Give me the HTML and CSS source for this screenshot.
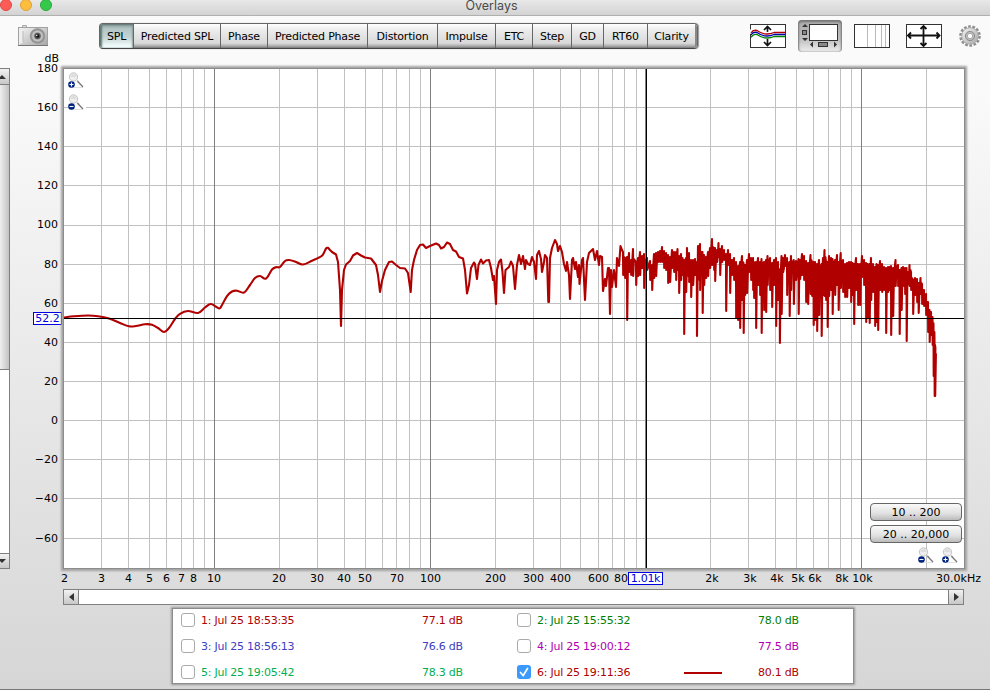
FILE: index.html
```
<!DOCTYPE html>
<html lang="en">
<head>
    <meta charset="UTF-8">
    <title>Overlays</title>
    <link rel="stylesheet" href="styles.css">
</head>
<body>
    <!-- Icons used more than once -->
    <svg class="defs">
        <defs>
            <linearGradient id="metal" x1="0" y1="0" x2="1" y2="1">
                <stop offset="0" stop-color="#f4f4f4"/>
                <stop offset="1" stop-color="#a6a6a6"/>
            </linearGradient>
            <radialGradient id="lens">
                <stop offset="0" stop-color="#eee"/>
                <stop offset="0.35" stop-color="#777"/>
                <stop offset="0.6" stop-color="#ccc"/>
                <stop offset="1" stop-color="#777"/>
            </radialGradient>
            <symbol id="glass" viewBox="0 0 16 17">
                <path d="M1 15.5h14" stroke="#e2e2e2"/>
                <circle cx="5.5" cy="5" r="4.2" fill="#eee" stroke="#c4c4c4"/>
                <path d="M2.5 5a3 3 0 0 1 6 0z" fill="#ddd"/>
                <path d="M9 8.5l2 2" stroke="#bbb" stroke-width="1.5"/>
                <path d="M9.500 9.300l5.500 5.700" stroke="#777" stroke-width="1.3"/>
                <circle cx="3.5" cy="12.5" r="3.3" fill="#00247e"/>
            </symbol>
            <symbol id="zoom-in" viewBox="0 0 16 17">
                <use href="#glass"/>
                <path d="M1.5 12.5h4M3.5 10.5v4" stroke="#fff" stroke-width="1.1"/>
            </symbol>
            <symbol id="zoom-out" viewBox="0 0 16 17">
                <use href="#glass"/>
                <path d="M1.5 12.5h4" stroke="#fff" stroke-width="1.1"/>
            </symbol>
        </defs>
    </svg>

    <div class="titlebar">
        <div class="lights">
            <span class="light red"></span>
            <span class="light yellow"></span>
            <span class="light green"></span>
        </div>
        <div class="title">Overlays</div>
    </div>

    <!-- Toolbar -->
    <div class="toolbar">
        <svg class="camera" width="30" height="22" viewBox="0 0 30 22">
            <path d="M4.500 2v-1.500h4v1.500" fill="#ddd" stroke="#aaa"/>
            <rect x="0.500" y="2.500" width="29" height="18" fill="url(#metal)" stroke="#a2a2a2"/>
            <path d="M1 3l4 3v11l-4 3z" fill="#eee"/>
            <path d="M5 6v11" stroke="#bbb"/>
            <path d="M0 20.500h30" stroke="#777"/>
            <circle cx="19.500" cy="11" r="7.300" fill="url(#lens)" stroke="#999"/>
            <circle cx="19.500" cy="11" r="3" fill="#555"/>
            <circle cx="19.500" cy="11" r="1.800" fill="#111"/>
            <circle cx="18.800" cy="10.500" r="0.700" fill="#fff"/>
        </svg>
        <div class="tabs">
            <button class="tab active">SPL</button>
            <button class="tab">Predicted SPL</button>
            <button class="tab">Phase</button>
            <button class="tab">Predicted Phase</button>
            <button class="tab">Distortion</button>
            <button class="tab">Impulse</button>
            <button class="tab">ETC</button>
            <button class="tab">Step</button>
            <button class="tab">GD</button>
            <button class="tab">RT60</button>
            <button class="tab">Clarity</button>
        </div>
        <div class="tools">
            <svg width="36" height="24" viewBox="0 0 36 24">
                <rect x="0.500" y="0.500" width="35" height="23" fill="#fff" stroke="#333"/>
                <path d="M17.500 3v18M14 6l3.500-3.500L21 6M14 18l3.500 3.500L21 18" fill="none" stroke="#111" stroke-width="1.700"/>
                <g fill="none" stroke-width="1.300">
                    <path d="M1 10Q3 6.500 7 7.500Q12 11 17 11.500Q21 11.500 24 10H35" stroke="#fff" stroke-width="7"/>
                    <path d="M1 9Q3 5.500 7 6.500Q12 10 17 10Q21 10 24 8.500H35" stroke="#b00000"/>
                    <path d="M1 11Q3 7.500 7 8.500Q12 12 17 12Q21 12 24 10.500H35" stroke="#0000b0"/>
                    <path d="M1 13.500Q3 9.500 7 10.500Q12 14 17 14Q21 14 24 12.500H35" stroke="#008000"/>
                </g>
            </svg>
            <div class="tool-on">
                <svg width="40" height="28" viewBox="0 0 40 28">
                    <rect x="9.500" y="2.500" width="28" height="16" fill="#fff" stroke="#333"/>
                    <path d="M2 5l3-3 3 3zM2 16l3 3 3-3zM13 19.500l-3 3 3 3zM34 19.500l3 3-3 3z" fill="#333"/>
                    <rect x="2.500" y="8.500" width="4" height="4" fill="#888" stroke="#333"/>
                    <rect x="18.500" y="20.500" width="9" height="4" fill="#888" stroke="#333"/>
                </svg>
            </div>
            <svg width="36" height="24" viewBox="0 0 36 24">
                <rect x="0.500" y="0.500" width="35" height="23" fill="#fff" stroke="#333"/>
                <path d="M13.500 1v22M21.500 1v22M27.500 1v22M31.500 1v22" stroke="#bbb"/>
            </svg>
            <svg class="move" width="36" height="24" viewBox="0 0 36 24">
                <rect x="0.500" y="0.500" width="35" height="23" fill="#fff" stroke="#333"/>
                <path d="M2 11.500h31M17.500 2v20M5 8.500l-3 3 3 3M30.500 8.500l3 3-3 3M14.500 5l3-3 3 3M14.500 19l3 3 3-3" fill="none" stroke="#111" stroke-width="1.800"/>
            </svg>
            <svg class="gear" width="22" height="22" viewBox="-11 -11 22 22">
                <circle r="9.500" fill="none" stroke="#8e8e8e" stroke-width="2.600" stroke-dasharray="2.700 1.563"/>
                <circle r="8.300" fill="url(#metal)" stroke="#a2a2a2" stroke-width="0.800"/>
                <circle r="4.600" fill="#bbb" stroke="#8c8c8c"/>
                <circle r="2.700" fill="#fff" stroke="#aaa"/>
            </svg>
        </div>
    </div>

    <!-- Chart area -->
    <div class="main">
        <div class="vscroll">
            <div class="arrow-box"><span class="arrow up"></span></div>
            <div class="thumb"></div>
            <div class="track"></div>
            <div class="arrow-box"><span class="arrow down"></span></div>
        </div>
        <div class="y-axis">
            <span class="unit">dB</span>
            <div class="y-labels">
                <span>180</span>
                <span>160</span>
                <span>140</span>
                <span>120</span>
                <span>100</span>
                <span>80</span>
                <span>60</span>
                <span>40</span>
                <span>20</span>
                <span>0</span>
                <span>−20</span>
                <span>−40</span>
                <span>−60</span>
            </div>
            <span class="readout y-readout">52.2</span>
        </div>
        <div class="plot">
            <svg id="chart" width="900" height="499" viewBox="64 69 900 499">
                <g id="grid"></g>
                <path id="trace"/>
                <path class="cursor" d="M646.500 69v499M64 318.500h900"/>
            </svg>
            <div class="zoom-v">
                <svg width="16" height="17"><use href="#zoom-in"/></svg>
                <svg width="16" height="17"><use href="#zoom-out"/></svg>
            </div>
            <div class="ranges">
                <button class="range">10 .. 200</button>
                <button class="range">20 .. 20,000</button>
                <div class="zoom-h">
                    <svg width="16" height="17"><use href="#zoom-out"/></svg>
                    <svg width="16" height="17"><use href="#zoom-in"/></svg>
                </div>
            </div>
        </div>
    </div>

    <div class="x-axis">
        <svg id="xLabels" width="990" height="20" viewBox="0 569 990 20"></svg>
        <span class="readout x-readout">1.01k</span>
    </div>

    <div class="hscroll">
        <div class="arrow-box"><span class="arrow left"></span></div>
        <div class="track"></div>
        <div class="arrow-box"><span class="arrow right"></span></div>
    </div>

    <!-- Measurement list -->
    <div class="legend">
        <div class="entry c1"><span class="check"></span><span class="name">1: Jul 25 18:53:35</span><span class="line"></span><span class="value">77.1 dB</span></div>
        <div class="entry c2"><span class="check"></span><span class="name">2: Jul 25 15:55:32</span><span class="line"></span><span class="value">78.0 dB</span></div>
        <div class="entry c3"><span class="check"></span><span class="name">3: Jul 25 18:56:13</span><span class="line"></span><span class="value">76.6 dB</span></div>
        <div class="entry c4"><span class="check"></span><span class="name">4: Jul 25 19:00:12</span><span class="line"></span><span class="value">77.5 dB</span></div>
        <div class="entry c5"><span class="check"></span><span class="name">5: Jul 25 19:05:42</span><span class="line"></span><span class="value">78.3 dB</span></div>
        <div class="entry c6">
            <span class="check checked"><svg width="14" height="14" viewBox="0 0 14 14"><path d="M3.500 7.500l2.700 3L10.500 3.500" fill="none" stroke="#fff" stroke-width="1.700" stroke-linecap="round"/></svg></span>
            <span class="name">6: Jul 25 19:11:36</span><span class="line shown"></span><span class="value">80.1 dB</span>
        </div>
    </div>

    <script src="chart.js"></script>
</body>
</html>
```
FILE: styles.css
```
/* General Styles */
* {
    box-sizing: border-box;
}

body {
    margin: 0;
    width: 990px;
    height: 690px;
    overflow: hidden;
    font-family: "DejaVu Sans", sans-serif;
    font-size: 11px;
    color: #000;
    background: linear-gradient(to bottom, #fafafa 0, #fafafa 90px, #d6d6d6 690px);
    border-bottom: 1px solid #777;
}

button {
    font-family: inherit;
    font-size: 11px;
    padding: 0;
    color: #000;
}

svg {
    display: block;
}

.defs {
    position: absolute;
    width: 0;
    height: 0;
}

/* Title bar */
.titlebar {
    display: flex;
    height: 16px;
    background: linear-gradient(to bottom, #e8e8e8, #d3d3d3);
    border-bottom: 1px solid #b0b0b0;
}

.lights {
    display: flex;
    gap: 8px;
    width: 100px;
    margin: -1px 0 0 0;
}

.light {
    width: 12px;
    height: 12px;
    border-radius: 50%;
    flex: none;
}

.red {
    background: #fc5b57;
    border: 1px solid #e2463f;
}

.yellow {
    background: #fdbe40;
    border: 1px solid #e0a030;
}

.green {
    background: #35c94b;
    border: 1px solid #27a837;
}

.title {
    width: 783px;
    text-align: center;
    font: 12.5px/12px Inter, sans-serif;
    color: #4a4a4a;
}

/* Toolbar */
.toolbar {
    display: flex;
    height: 37px;
    padding-left: 18px;
}

.camera {
    margin-top: 9px;
}

.tabs {
    display: grid;
    grid-template-columns: 34px 87px 47px 100px 70px 58px 37px 39px 32px 44px 49px;
    width: 599px;
    height: 26px;
    margin: 7px 0 0 51px;
    border-radius: 4px;
    overflow: hidden;
    border: 1px solid #666;
    border-bottom-color: #444;
    box-shadow: 1px 0 1px #999;
}

.tab {
    border: none;
    border-right: 1px solid #666;
    letter-spacing: -0.2px;
    white-space: nowrap;
    background: linear-gradient(to bottom, #fff 0, #ececec 25%, #d9d9d9 80%, #aaa 92%, #777 100%);
}

.tab:last-child {
    border-right: 2px solid #888;
}

.active {
    background: linear-gradient(to bottom, #8ba09f 0, #b3c6c5 20%, #c3d3d2 55%, #f6ffff 95%);
    box-shadow: inset 2px 1px 2px #607573, inset -1px 0 2px #8a9c9b;
}

.tools {
    display: flex;
    gap: 12px;
    margin: 8px 0 0 52px;
}

.tool-on {
    width: 44px;
    height: 32px;
    margin-top: -4px;
    padding: 2px;
    border-radius: 4px;
    background: linear-gradient(to bottom, #aaa, #c0c0c0 60%, #eee);
    box-shadow: inset 0 1px 2px 1px #777;
}

.tools .move {
    margin-left: 4px;
}

.tools .gear {
    margin: 1px 0 0 5px;
}

/* Chart area */
.main {
    display: flex;
    height: 515px;
}

.vscroll {
    display: flex;
    flex-direction: column;
    width: 10px;
    height: 501px;
    margin-top: 15px;
    border: 1px solid #808080;
    border-left: none;
}

.vscroll .arrow-box {
    height: 15px;
}

.thumb {
    height: 286px;
    background: linear-gradient(to right, #eee, #c2c2c2);
    border-top: 1px solid #808080;
    border-bottom: 1px solid #808080;
}

.track {
    flex: 1;
    background: #fff;
}

.arrow-box {
    display: flex;
    align-items: center;
    justify-content: center;
    flex: none;
    background: linear-gradient(to bottom, #f2f2f2, #c8c8c8);
}

.vscroll .arrow-box {
    justify-content: flex-start;
}

.vscroll .arrow-box:last-child {
    border-top: 1px solid #808080;
}

.arrow {
    border: 4px solid transparent;
}

.up {
    border-top: none;
    border-bottom: 4px solid #333;
    margin-left: -2px;
}

.down {
    border-bottom: none;
    border-top: 4px solid #333;
    margin-left: -2px;
}

.left {
    border-left: none;
    border-right: 5px solid #333;
}

.right {
    border-right: none;
    border-left: 5px solid #333;
}

.y-axis {
    position: relative;
    width: 53px;
    text-align: right;
}

.unit {
    display: block;
    height: 12px;
    line-height: 12px;
    padding-right: 4px;
}

.y-labels {
    display: flex;
    flex-direction: column;
    margin-top: -16.2px;
    padding-right: 5px;
}

.y-labels span {
    height: 39.150px;
    line-height: 39.150px;
}

.readout {
    position: absolute;
    background: #fff;
    color: #0000e0;
    border: 1px solid #0000e0;
    text-align: center;
    line-height: 11px;
    height: 13px;
}

.y-readout {
    top: 259px;
    left: 23px;
    width: 29px;
}

.plot {
    position: relative;
    width: 902px;
    height: 501px;
    margin-top: 15px;
    background: #fff;
    border: 1px solid #8c8c8c;
    box-shadow: 0 0 2px 2px #a2a2a2;
}

#trace {
    fill: none;
    stroke: #b00000;
    stroke-width: 2.1;
    stroke-linejoin: round;
    stroke-linecap: round;
}

.minor {
    stroke: #c0c0c0;
}

.major {
    stroke: #808080;
}

.cursor {
    stroke: #000;
}

.zoom-v {
    position: absolute;
    left: 4px;
    top: 3px;
    display: flex;
    flex-direction: column;
    gap: 5px;
    width: 18px;
    background: #fff;
}

.ranges {
    position: absolute;
    right: 2px;
    bottom: 4px;
    display: flex;
    flex-direction: column;
    gap: 4px;
    width: 92px;
}

.range {
    height: 18px;
    border: 1px solid #666;
    border-radius: 4px;
    background: linear-gradient(to bottom, #fafafa, #e0e0e0 60%, #bbb);
}

.zoom-h {
    display: flex;
    justify-content: flex-end;
    gap: 8px;
    padding-right: 4px;
}

.x-axis {
    position: relative;
    height: 21px;
}

.x-readout {
    left: 628px;
    top: 4px;
    width: 35px;
    letter-spacing: -0.3px;
}

.hscroll {
    display: flex;
    width: 901px;
    height: 16px;
    margin-left: 63px;
    border: 1px solid #808080;
}

.hscroll .arrow-box {
    width: 15px;
}

.hscroll .arrow-box:first-child {
    border-right: 1px solid #808080;
}

.hscroll .arrow-box:last-child {
    border-left: 1px solid #808080;
}

/* Measurement list */
.legend {
    display: grid;
    grid-template-columns: 336px 1fr;
    grid-auto-rows: 26px;
    width: 682px;
    height: 76px;
    margin: 3px 0 0 172px;
    padding: 0 0 0 8px;
    align-content: center;
    background: #fff;
    border: 1px solid #8c8c8c;
    box-shadow: 0 0 2px 1px #999;
}

.entry {
    display: flex;
    align-items: center;
}

.check {
    width: 14px;
    height: 14px;
    border: 1px solid #aaa;
    border-radius: 3px;
    background: #fff;
}

.checked {
    border: none;
    background: #3b99fc;
}

.name {
    width: 147px;
    padding-left: 6px;
    white-space: nowrap;
    letter-spacing: -0.25px;
}

.line {
    width: 38px;
    height: 2px;
    margin: 2px 36px 0 6px;
}

.shown {
    background: #b00000;
}

.value {
    letter-spacing: -0.25px;
}

.c1,
.c6 {
    color: #b00000;
}

.c2 {
    color: #008000;
}

.c3 {
    color: #4040c0;
}

.c4 {
    color: #b000b0;
}

.c5 {
    color: #00b050;
}
```
FILE: chart.js
```
const NS = 'http://www.w3.org/2000/svg';
const grid = document.getElementById('grid');

function addLine(x1, y1, x2, y2, cls) {
    const line = document.createElementNS(NS, 'line');
    line.setAttribute('x1', x1);
    line.setAttribute('y1', y1);
    line.setAttribute('x2', x2);
    line.setAttribute('y2', y2);
    line.setAttribute('class', cls);
    grid.appendChild(line);
}

// horizontal lines, every 20 dB
for (const y of [107, 146, 185, 225, 264, 303, 342, 381, 420, 459, 498, 538]) {
    addLine(64, y + 0.5, 964, y + 0.5, 'minor');
}

// vertical lines, log frequency scale
for (const decade of [1, 10, 100, 1000, 10000]) {
    for (let n = 1; n < 10; n++) {
        const f = decade * n;
        if (f <= 2 || f >= 30000) continue;
        const x = Math.floor(214.5 + 215.7 * (Math.log10(f) - 1)) + 0.5;
        addLine(x, 69, x, 568, n === 1 ? 'major' : 'minor');
    }
}

const smooth = [
    [64, 317.5], [74, 316.3], [88, 315.5], [98, 316.2], [109, 318.5], [120, 323], [129, 326.3],
    [136, 326], [145, 324.2], [152, 324.7], [158, 328], [164, 332], [169, 328], [175, 319],
    [180, 313.8], [188, 311], [198, 313], [205, 307.5], [211, 304], [219, 308.5], [222, 305],
    [227, 296], [232, 291.5], [237, 290.7], [244, 292.5], [250, 285], [255, 278], [260, 276],
    [266, 278.5], [272, 269.5], [276, 267.2], [280, 267], [285, 261], [289, 260], [295, 261.5],
    [303, 264.5], [312, 260.7], [322, 255.7], [326, 248.5], [328, 247.8]
];

const peaks = [
    [330, 250], [332, 252], [336, 254.5], [338, 262], [340, 290], [341, 326], [342, 290], [344, 270],
    [346, 264.5], [350, 261], [353, 255.5], [357, 253], [361, 255.5], [365, 257.5], [371, 258.5],
    [376, 265], [378, 275], [380, 292], [382, 281], [385, 270], [389, 262], [392, 261.5], [396, 265],
    [400, 268], [405, 268.5], [408, 273], [410.7, 292], [412, 270], [414, 260], [417, 250], [420, 245],
    [423, 244.5], [426, 248], [430, 246], [436, 243.5], [439, 245], [441, 248.5], [444, 247],
    [447, 242.5], [450, 244], [453, 250], [456, 251.5], [459, 257], [463, 258.5], [465, 270],
    [467, 293.5], [469, 285], [471, 268], [474, 262.5], [475, 264], [477, 279], [478.5, 265],
    [481, 259.5], [483, 263.5], [486, 260.5], [489, 260], [491, 268], [493, 280], [494, 276],
    [496, 304], [497, 270], [499, 262], [501, 259.5], [502.5, 272], [504, 293], [505.5, 270],
    [509, 267], [511, 261.5], [513, 266], [515, 289], [517, 265], [519, 255], [521, 264], [523, 256],
    [525, 269], [526, 260], [528, 264], [530, 265], [532, 257], [534, 262], [536, 279], [537, 255],
    [539, 251], [541, 259], [542, 272], [544, 262], [545, 255], [547, 258], [548.3, 302], [549, 302],
    [550, 258], [552, 248], [555, 240], [557, 244], [558, 251], [560, 246], [562, 252], [564, 264],
    [566, 271], [567, 262], [569, 275], [570, 299], [572, 260], [573, 258], [575, 269], [576, 262],
    [578, 277], [579, 265], [579.5, 284], [582, 260], [583, 258], [585, 300], [587, 262], [589, 253],
    [593, 249], [595, 260], [597, 251], [599, 265], [600, 256], [602, 257], [603, 291], [605, 279],
    [606, 286], [608, 268], [609, 268], [610, 314], [611, 270], [612, 287], [614, 270], [616, 287],
    [617, 258], [619, 266], [620.5, 246], [622, 250]
];

// x, highest point, lowest point
const bands = [
    [623, 252, 275], [625, 258, 278], [627, 257, 320], [629, 253, 272], [631, 260, 275],
    [633, 249, 276], [636, 262, 285], [638, 258, 276], [640, 252, 275], [642, 256, 268],
    [644, 254, 288], [647, 258, 270], [650, 261, 280], [652, 265, 290], [654, 254, 278],
    [656, 253, 276], [658, 252, 262], [660, 251, 262], [662, 247, 262], [664, 251, 268],
    [666, 253, 270], [668, 255, 283], [670, 257, 282], [672, 250, 268], [674, 252, 272],
    [676, 252, 280], [677.5, 249, 270], [679, 256, 293], [681, 254, 280], [682.5, 258, 275],
    [684, 260, 334], [686, 258, 292], [687, 248, 276], [689, 253, 282], [691, 260, 297],
    [693, 260, 285], [695, 259, 275], [696.8, 262, 336], [698, 246, 280], [700, 244, 290],
    [702.5, 252, 313], [704, 255, 285], [706, 257, 278], [708, 252, 276], [710, 248, 268],
    [712, 239, 265], [714, 248, 270], [715, 248, 281], [717, 250, 262], [718.5, 243, 257],
    [720, 249, 275], [722, 246, 262], [724, 250, 260], [726, 254, 311], [728, 250, 265],
    [730, 254, 293], [732, 260, 275], [734, 258, 280], [736, 262, 318], [738, 266, 320],
    [740, 262, 328], [742, 256, 300], [743.5, 263, 333], [745, 265, 295], [747, 260, 293],
    [749, 254, 272], [751, 258, 280], [753, 258, 290], [754, 262, 298], [756, 262, 328],
    [758, 258, 285], [760, 262, 295], [761.5, 259, 333], [764, 262, 310], [766, 260, 312],
    [767.5, 256, 285], [770, 258, 290], [772, 263, 307], [774, 260, 285], [776, 258, 326],
    [778, 262, 300], [779.7, 270, 343], [781.5, 256, 314], [783, 258, 272], [785, 255, 266],
    [787, 258, 295], [789.5, 262, 316], [791, 256, 290], [793.7, 260, 304], [796, 261, 280],
    [798.5, 259, 314], [800, 260, 279], [802, 254, 275], [804, 256, 280], [806, 261, 302],
    [808, 263, 304], [810.5, 255, 294], [812, 262, 296], [813.5, 262, 325], [815, 262, 320],
    [817, 264, 331], [819, 260, 315], [821.5, 264, 336], [823, 258, 295], [824.5, 250, 296],
    [826, 262, 300], [827.5, 262, 327], [829, 256, 296], [831, 258, 290], [832.5, 259, 314],
    [835, 260, 295], [837, 255, 285], [838.5, 262, 310], [840.7, 253, 288], [843, 260, 292],
    [845, 264, 297], [847, 263, 297], [849, 262, 288], [851, 262, 302], [852.5, 263, 295],
    [854, 264, 324], [856, 258, 290], [858, 264, 305], [860, 264, 305], [862, 256, 277],
    [864, 260, 285], [866, 263, 322], [867.5, 264, 318], [869.5, 264, 323], [871, 258, 300],
    [873, 264, 292], [875, 267, 326], [876.5, 264, 322], [878, 265, 330], [880, 261, 290],
    [882, 264, 292], [884, 267, 290], [886, 268, 333], [888, 267, 292], [889.5, 267, 290],
    [891, 266, 335], [893, 268, 316], [895.5, 260, 286], [898, 265, 286],
    [899.5, 270, 334], [901.5, 268, 310], [903, 267, 286], [905, 268, 294], [906.5, 268, 341],
    [908, 272, 284], [909.5, 265, 286], [911, 272, 290], [913, 280, 314], [915, 278, 295],
    [917, 279, 302], [918.5, 283, 313], [920.5, 278, 294], [922, 284, 304], [924, 290, 306],
    [926, 294, 315], [928, 302, 332], [929.5, 310, 342], [931, 312, 335], [932.5, 317, 345],
    [933.5, 325, 376], [934.5, 340, 396], [935, 345, 396]
];

// Catmull-Rom through the low frequency points, straight segments after that
let d = 'M' + smooth[0].join(' ');
for (let i = 0; i < smooth.length - 1; i++) {
    const p0 = smooth[i - 1] || smooth[i];
    const p1 = smooth[i];
    const p2 = smooth[i + 1];
    const p3 = smooth[i + 2] || p2;
    d += ` C${p1[0] + (p2[0] - p0[0]) / 6} ${p1[1] + (p2[1] - p0[1]) / 6}`
        + ` ${p2[0] - (p3[0] - p1[0]) / 6} ${p2[1] - (p3[1] - p1[1]) / 6} ${p2[0]} ${p2[1]}`;
}
for (const [x, y] of peaks) {
    d += ` L${x} ${y}`;
}
bands.forEach(([x, top, low], i) => {
    // come back up between two peaks, below both of them
    const back = top + 5 + (i * 7) % 6;
    d += ` L${x} ${top} L${x + 0.2} ${low} L${x + 0.9} ${Math.min(back, low)}`;
});
document.getElementById('trace').setAttribute('d', d);

// frequency labels, the one at 800 is cut short by the cursor readout
const labels = [
    [64.5, '2'], [101.5, '3'], [128.5, '4'], [149.5, '5'], [166.5, '6'], [181.5, '7'], [193.5, '8'],
    [214, '10'], [279, '20'], [317, '30'], [344, '40'], [365, '50'], [397, '70'], [430.5, '100'],
    [495.5, '200'], [533.5, '300'], [560.5, '400'], [598.5, '600'], [621, '80'],
    [712, '2k'], [750, '3k'], [777, '4k'], [798, '5k'], [815, '6k'], [842, '8k'], [862.5, '10k'],
    [958.5, '30.0kHz']
];
for (const [x, text] of labels) {
    const t = document.createElementNS(NS, 'text');
    t.setAttribute('x', x);
    t.setAttribute('y', 582.5);
    t.setAttribute('text-anchor', 'middle');
    t.textContent = text;
    document.getElementById('xLabels').appendChild(t);
}
```
